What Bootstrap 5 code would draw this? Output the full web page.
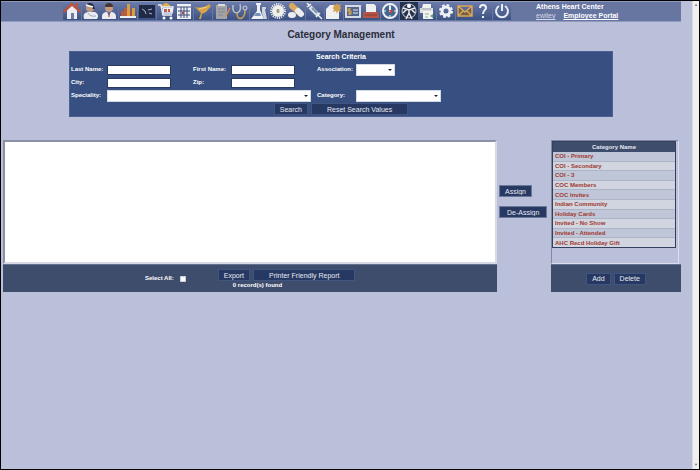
<!DOCTYPE html>
<html lang="en">
<head>
<meta charset="utf-8">
<meta name="viewport" content="width=device-width, initial-scale=1">
<title>Category Management</title>
<link rel="stylesheet" href="https://cdn.jsdelivr.net/npm/bootstrap@5.3.0/dist/css/bootstrap.min.css">
<style>
body{font:700 7px/9px "Liberation Sans",Arial,sans-serif;background:#bac0da;color:#fff}
.frame{border:1px solid #000;min-height:100vh}
.page-main{padding-right:11px;min-width:0}
.scroll-rail{width:7px;background:#f0f0f0;border-left:1px solid #d8dbe6;color:#777;font-size:4px;line-height:8px}
.topbar{background:#6775a1;height:21px;border-top:1px solid #8d98bd;border-bottom:1px solid #909bbf;padding-left:62px}
.tools{width:449px;height:18px}
.tools a{flex:1 1 0;min-width:0;padding-right:1px;display:block}
.tools svg{display:block;width:18px;height:18px;background:linear-gradient(#6b7aaa,#3c5283);overflow:hidden}
.account{padding-left:24px;line-height:9px}
.account a{color:#fff}
.account .user{color:#d5d9e8;font-weight:400}
h1{font-size:10px;line-height:14px;font-weight:700;color:#2b2d3c;margin:6px 0 9px}
.criteria{width:80%;background:#385081;border:1px solid #4c6091;padding:0 1px 1px}
.fields{display:grid;grid-template-columns:36px 86px 38px 86px 39px 1fr;grid-auto-rows:13px;align-items:center;padding-top:2px}
label{font-size:6px;white-space:nowrap}
.fields input{width:64px;height:10px;border:1px solid #283a62;padding:0 2px;background:#fff;font-size:7px}
.fields select{appearance:none;height:12px;border:1px solid #d4d8e2;border-radius:0;padding:0 10px 0 2px;font-size:7px;background:#fff url("data:image/svg+xml,%3Csvg xmlns='http://www.w3.org/2000/svg' width='4' height='2'%3E%3Cpath d='M0 0h4L2 2z' fill='%23223'/%3E%3C/svg%3E") no-repeat right 2px center}
.sel-wide{grid-column:2/5;width:204px}
.sel-short{width:39px}.sel-mid{width:85px}
.cmd{font:400 7px/9px "Liberation Sans",Arial,sans-serif;color:#e6e9f2;background:#273962;border:1px solid #40557f;border-radius:0;padding:0 5px;height:12px;white-space:nowrap}
.cmd:hover{background:#304573;color:#fff}
.cmd-wide{padding:0 15px}
.cmd-row{gap:3px}
.criteria .cmd-row{padding-top:1px}
.workspace{margin-top:23px;padding-left:2px;align-items:flex-start}
.results{background:#fff;height:124px;border:2px solid #8b91a8;border-right-color:#d7dae5;border-bottom-color:#d7dae5}
.foot{background:#3f4d6d;height:28px;border-top:1px solid #66718f}
.left-foot{padding-left:142px}
.left-foot input{width:6px;height:6px;margin:0 0 0 6px;border:1px solid #c8ccd6;border-radius:0;background:#fff;appearance:none}
.left-foot input:checked{background:#273962}
.report-tools{padding:4px 0 0 32px}
.found{padding-left:15px;font-size:6px}
.transfer{width:54px;padding:45px 2px 0;gap:9px}
.transfer .cmd{border-color:#6a7899;outline:1px solid #2a3c64;outline-offset:-2px}
.transfer .cmd:last-child{padding:0 7px}
.categories{width:130px}
.cat-list{height:124px;border:1px solid #8188a3;border-right-color:#dde;border-bottom-color:#dde;margin-right:2px;padding-right:2px}
.cat-table{width:100%;height:107px;border:1px solid #34405e;border-collapse:separate;border-spacing:0;font-size:6px;line-height:8px}
.cat-table th{background:#3f4d6d;text-align:center;padding:1px;color:#e6e9f2}
.cat-table td{padding:0 2px;border-bottom:1px solid #adb4c5;background:#d0d5e0}
.cat-table tr:nth-child(odd) td{background:#bfc6d7}
.cat-table tbody tr:last-child td{border-bottom:0}
.cat-table a{color:#a1382f;text-decoration:none}
</style>
<script src="https://cdn.jsdelivr.net/npm/bootstrap@5.3.0/dist/js/bootstrap.bundle.min.js"></script>
</head>
<body>
<div class="frame d-flex">
<div class="page-main flex-grow-1">
<header class="topbar d-flex">
<nav class="tools d-flex flex-shrink-0" aria-label="Tools">
<a href="#" aria-label="Home"><svg viewBox="0 0 18 18"><path d="M4 8v9h10V8L9 3z" fill="#eceef4"/><path d="M8 11h3v6H8z" fill="#6c7ba6"/><path d="M13 1h2v4h-2zM0 9l8-8h2l8 8-1 2-8-7-8 7z" fill="#b8543f"/></svg></a>
<a href="#" aria-label="Patient"><svg viewBox="0 0 18 18"><path d="M2 17q-2-6 4-7h7q5 3 2 7z" fill="#e8eaf0"/><path d="M6 11q2 4 8 3" fill="none" stroke="#9ba6bf"/><circle cx="8" cy="6" r="4" fill="#c29a80"/><path d="M4 4q2-5 7-2l2 5h-2L9 4z" fill="#24293d"/><path d="M4 3l7 2" stroke="#fff" stroke-width="1.500"/></svg></a>
<a href="#" aria-label="Doctor"><svg viewBox="0 0 18 18"><path d="M2 17q-1-6 4-7h6q5 1 4 7z" fill="#e9ebf0"/><path d="M7 10h4l-2 4z" fill="#5273a3"/><path d="M9 11v4" stroke="#b33"/><circle cx="9" cy="6" r="4" fill="#c59b83"/><path d="M5 5q0-4 4-4t4 4z" fill="#473633"/></svg></a>
<a href="#" aria-label="Statistics"><svg viewBox="0 0 18 18"><path d="M2 9h3v5H2zM5 6h3v8H5z" fill="#b85b45"/><path d="M8 2h3v12H8z" fill="#d5a044"/><path d="M11 8h2v6h-2z" fill="#a95243"/><path d="M13 6h3v8h-3z" fill="#d5a044"/><path d="M1 14h16v2H1z" fill="#edf0f4"/></svg></a>
<a href="#" aria-label="Imaging"><svg viewBox="0 0 18 18"><path d="M1 3h16v13H1z" fill="#202a46"/><path d="M4 7l3 2 1 3M10 8l4-1M11 11l3 1" fill="none" stroke="#aeb6c6"/></svg></a>
<a href="#" aria-label="Orders"><svg viewBox="0 0 18 18"><path d="M4 5q5-8 10 0z" fill="#deb053"/><path d="M1 3h3l2 10h9M5 5h11l-1 6H6" fill="none" stroke="#eceef4" stroke-width="1.500"/><path d="M6 6h9v4H6z" fill="#eceef4"/><path d="M7 7h3v3H7zM11 7h2v3h-2z" fill="#b9604a"/><circle cx="7" cy="16" r="1.500" fill="#fff"/><circle cx="14" cy="16" r="1.500" fill="#fff"/></svg></a>
<a href="#" aria-label="Calendar"><svg viewBox="0 0 18 18"><path d="M2 2h14v15H2z" fill="#eef0f5"/><path d="M2 5h14M3 9h12M3 13h12M6 5v11M9 5v11M12 5v11" stroke="#3d4d78"/><path d="M7 10h2v2H7z" fill="#b94332"/></svg></a>
<a href="#" aria-label="Gallbladder"><svg viewBox="0 0 18 18"><path d="M1 5q8 2 14-3l2 2-5 6-4 2-1 5H5l2-6z" fill="#d6a347"/><path d="M5 7l8-2" stroke="#efd17e"/></svg></a>
<a href="#" aria-label="Notes"><svg viewBox="0 0 18 18"><path d="M3 3h11v14H3z" fill="#a4a4a6"/><path d="M5 2h7v2H5z" fill="#ddd"/><path d="M5 7h7M5 10h7M5 13h5" stroke="#7d8595"/><path d="M17 6l-4 8" stroke="#cd8b49" stroke-width="1.500"/></svg></a>
<a href="#" aria-label="Examination"><svg viewBox="0 0 18 18"><path d="M2 3q-1 8 4 8 5-2 3-9" fill="none" stroke="#b9c1ca" stroke-width="1.500"/><path d="M6 11q0 7 5 5 3-2 3-8" fill="none" stroke="#cda153" stroke-width="1.500"/><circle cx="14" cy="6" r="2" fill="none" stroke="#d8dce5"/></svg></a>
<a href="#" aria-label="Laboratory"><svg viewBox="0 0 18 18"><path d="M6 1h5v2h-1v5l4 9H1L7 9V3H6z" fill="#edf0f5"/><path d="M6 11h4l1 3H4z" fill="#7790b4"/><path d="M12 5h4v2h-1l2 10h-3l-2-6z" fill="#cfd5e0"/></svg></a>
<a href="#" aria-label="Highlights"><svg viewBox="0 0 18 18"><circle cx="9" cy="9" r="6" fill="#f0f0eb"/><circle cx="9" cy="9" r="7" fill="none" stroke="#e8e9eb" stroke-width="2" stroke-dasharray="1.200 1"/><circle cx="9" cy="9" r="2" fill="#cbc9b4"/><path d="M9 7v4" stroke="#706c5a"/></svg></a>
<a href="#" aria-label="Medication"><svg viewBox="0 0 18 18"><path d="M5 4l8 7" stroke="#d6aa60" stroke-width="6" stroke-linecap="round"/><path d="M11 9l3 3" stroke="#eee" stroke-width="6" stroke-linecap="round"/><ellipse cx="5" cy="13" rx="4" ry="3" fill="#eceef2"/></svg></a>
<a href="#" aria-label="Injection"><svg viewBox="0 0 18 18"><path d="M4 5l8 8" stroke="#dce0e7" stroke-width="4"/><path d="M6 6l5 5" stroke="#7e9aad" stroke-width="2"/><path d="M1 5l4-3M1 1l3 3M10 15l4-4M12 13l4 4" stroke="#f0f1f4" stroke-width="1.500"/></svg></a>
<a href="#" aria-label="New document"><svg viewBox="0 0 18 18"><path d="M1 7l4-4h9v14H1z" fill="#f0f0f3"/><path d="M12 1l1 2 3-1-1 3 2 1-2 1 1 3-3-1-1 3-1-3-3 1 1-3-2-1 2-1-1-3 3 1z" fill="#d1a150"/></svg></a>
<a href="#" aria-label="Billing"><svg viewBox="0 0 18 18"><path d="M1 3h16v13H1z" fill="#d8dbe3"/><path d="M3 5h12v9H3z" fill="#52648b"/><path d="M7 7H4v2h3v3H4M5.500 6v7" fill="none" stroke="#d2a34c" stroke-width="1.200"/><path d="M9 8h5M9 11h5" stroke="#e6e8ed"/></svg></a>
<a href="#" aria-label="Printer"><svg viewBox="0 0 18 18"><path d="M4 2h8l2 2v7H4z" fill="#f0f0f2"/><path d="M2 10h14l1 3v3H1v-3z" fill="#b75446"/><path d="M3 13h12" stroke="#873d38"/></svg></a>
<a href="#" aria-label="Compass"><svg viewBox="0 0 18 18"><circle cx="9" cy="9" r="7" fill="#416790" stroke="#eef0f4" stroke-width="2"/><path d="M9 3v2M9 13v2M3 9h2M13 9h2" stroke="#fff"/><path d="M8 4h2v6H8z" fill="#eee"/><path d="M8 8h4l-2 4z" fill="#c94538"/></svg></a>
<a href="#" aria-label="Anatomy"><svg viewBox="0 0 18 18"><path d="M0 0h18v18H0z" fill="#26334f"/><circle cx="9" cy="9" r="7" fill="none" stroke="#cbd0d9"/><path d="M3 6l6 2 6-2M9 7v5M9 11l-3 6M9 11l3 6M3 11l4-4M15 11l-4-4" fill="none" stroke="#eee" stroke-width="1.500"/><circle cx="9" cy="4" r="2" fill="#fff"/></svg></a>
<a href="#" aria-label="Fax"><svg viewBox="0 0 18 18"><path d="M2 6h13v5H2z" fill="#dcded9"/><path d="M5 2h8v4H4zM5 9h10v8H5z" fill="#f2f2ef"/><path d="M4 7h9M7 12h4M7 15h3" stroke="#9aa5b0"/><path d="M12 14l3-2v4z" fill="#68a170"/></svg></a>
<a href="#" aria-label="Settings"><svg viewBox="0 0 18 18"><circle cx="9" cy="9" r="4" fill="none" stroke="#eef0f5" stroke-width="3"/><circle cx="9" cy="9" r="6" fill="none" stroke="#eef0f5" stroke-width="2" stroke-dasharray="2.700 2"/></svg></a>
<a href="#" aria-label="Mail"><svg viewBox="0 0 18 18"><path d="M2 4h14v10H2zM2 4l7 6 7-6M2 14l5-5M16 14l-5-5" fill="#735f4e" stroke="#daa753" stroke-width="1.500"/></svg></a>
<a href="#" aria-label="Help"><svg viewBox="0 0 18 18"><path d="M6 6q0-3 3-3t3 3c0 2-3 2-3 6M9 14v2" fill="none" stroke="#f1f2f5" stroke-width="2"/></svg></a>
<a href="#" aria-label="Log out"><svg viewBox="0 0 18 18"><path d="M6 4a6 6 0 1 0 6 0M9 2v7" fill="none" stroke="#e8ebf2" stroke-width="2"/></svg></a>
</nav>
<div class="account text-nowrap">
<div>Athens Heart Center</div>
<a class="user me-2" href="#">ewiley</a><a href="#">Employee Portal</a>
</div>
</header>
<h1 class="text-center">Category Management</h1>
<form class="criteria mx-auto" onsubmit="return false">
<div class="text-center">Search Criteria</div>
<div class="fields">
<label for="last">Last Name:</label><input id="last" type="text">
<label for="first">First Name:</label><input id="first" type="text">
<label for="assoc">Association:</label><select id="assoc" class="sel-short"><option></option></select>
<label for="city">City:</label><input id="city" type="text">
<label for="zip">Zip:</label><input id="zip" type="text"><span></span><span></span>
<label for="spec">Speciality:</label><select id="spec" class="sel-wide"><option></option></select>
<label for="cat">Category:</label><select id="cat" class="sel-mid"><option></option></select>
</div>
<div class="cmd-row d-flex justify-content-center"><button class="cmd" type="submit">Search</button><button class="cmd cmd-wide" type="reset">Reset Search Values</button></div>
</form>
<main class="workspace d-flex">
<section class="flex-grow-1">
<div class="results"></div>
<div class="foot left-foot d-flex">
<div class="d-flex align-items-center"><label for="all">Select All:</label><input id="all" type="checkbox"></div>
<div class="report-tools"><div class="cmd-row d-flex"><button class="cmd" type="button">Export</button><button class="cmd cmd-wide" type="button">Printer Friendly Report</button></div><div class="found">0 record(s) found</div></div>
</div>
</section>
<div class="transfer d-flex flex-column align-items-start flex-shrink-0"><button class="cmd" type="button">Assign</button><button class="cmd" type="button">De-Assign</button></div>
<section class="categories flex-shrink-0">
<div class="cat-list">
<table class="cat-table">
<thead><tr><th scope="col">Category Name</th></tr></thead>
<tbody>
<tr><td><a href="#">COI - Primary</a></td></tr>
<tr><td><a href="#">COI - Secondary</a></td></tr>
<tr><td><a href="#">COI - 3</a></td></tr>
<tr><td><a href="#">COC Members</a></td></tr>
<tr><td><a href="#">COC Invites</a></td></tr>
<tr><td><a href="#">Indian Community</a></td></tr>
<tr><td><a href="#">Holiday Cards</a></td></tr>
<tr><td><a href="#">Invited - No Show</a></td></tr>
<tr><td><a href="#">Invited - Attended</a></td></tr>
<tr><td><a href="#">AHC Recd Holiday Gift</a></td></tr>
</tbody>
</table>
</div>
<div class="foot cmd-row d-flex justify-content-center align-items-center"><button class="cmd" type="button">Add</button><button class="cmd" type="button">Delete</button></div>
</section>
</main>
</div>
<div class="scroll-rail d-flex flex-column justify-content-between text-center flex-shrink-0" aria-hidden="true"><span>▲</span><span>▼</span></div>
</div>
</body>
</html>
